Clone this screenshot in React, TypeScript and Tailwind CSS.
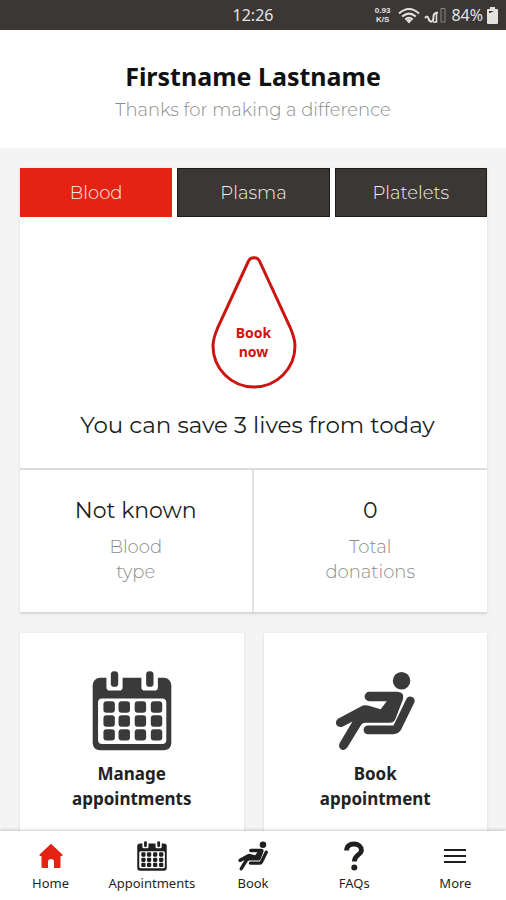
import { useState, type ReactNode } from "react";

const body = "font-['Montserrat','Inter',sans-serif]";
const display = "font-['Noto_Sans',sans-serif]";

function CalendarIcon({ className }: { className: string }) {
  return (
    <svg viewBox="66 34 238 238" className={className} aria-hidden="true">
      <rect x="68" y="54" width="234" height="216" rx="22" fill="currentColor" />
      <path d="M109 50H157V82Q157 92 147 92H119Q109 92 109 82ZM213 50H262V82Q262 92 252 92H223Q213 92 213 82Z" fill="#fff" />
      <rect x="122" y="35" width="22" height="46" rx="10" fill="currentColor" />
      <rect x="227" y="35" width="22" height="46" rx="10" fill="currentColor" />
      <rect x="84" y="116" width="203" height="135" rx="12" fill="#fff" />
      {[124, 166, 207].map((y) =>
        [100, 145, 193, 241].map((x) => (
          <rect key={`${x}-${y}`} x={x} y={y} width="34" height="34" rx="9" fill="currentColor" />
        )),
      )}
    </svg>
  );
}

function ReclineIcon({ className }: { className: string }) {
  return (
    <svg viewBox="76 36 238 236" className={className} fill="currentColor" stroke="currentColor" strokeLinecap="round" strokeLinejoin="round" aria-hidden="true">
      <circle cx="274" cy="64" r="26" stroke="none" />
      <path d="M178 97H262Q284 99 278 120L256 177Q251 189 240 189H166Q158 189 154 195L113 262Q106 272 96 269Q84 263 90 249L128 185L98 201Q86 204 80 195Q76 183 86 176L152 141Q162 135 174 138L212 149L230 125H178A14 14 0 0 1 178 97Z" stroke="none" />
      <path d="M174 210H250Q258 210 262 202L300 124" fill="none" strokeWidth="26" />
    </svg>
  );
}

function HomeIcon() {
  return (
    <svg viewBox="0 0 24 26" className="h-[26px] w-6 text-[#e42313]" fill="currentColor" aria-hidden="true">
      <path d="M12 0.8L23.4 11.5Q24 13 22.6 13H21.5V24Q21.5 25 20.5 25H15V18.5Q15 16 12 16T9 18.5V25H3.5Q2.5 25 2.5 24V13H1.4Q0 13 0.6 11.5Z" />
    </svg>
  );
}

function QuestionIcon() {
  return (
    <svg viewBox="0 0 20 30" className="h-[30px] w-5" fill="none" stroke="currentColor" aria-hidden="true">
      <path d="M2.6 9.5C2.6 5.3 5.5 3 10 3S17.4 5.6 17.4 9.2C17.4 14 10.4 13.6 10.4 20.5" strokeWidth="4.8" />
      <circle cx="10.3" cy="26.6" r="3" fill="currentColor" stroke="none" />
    </svg>
  );
}

function MenuIcon() {
  return (
    <svg viewBox="0 0 22 16" className="h-4 w-[22px]" stroke="currentColor" strokeWidth="2" aria-hidden="true">
      <path d="M0 2H22M0 8H22M0 14H22" />
    </svg>
  );
}

function StatusBar() {
  return (
    <div className="relative flex h-[30px] shrink-0 items-center justify-end bg-[#3b3735] pr-2 font-['Noto_Sans',sans-serif] text-[#e4e2e1]">
      <span className="absolute inset-x-0 text-center text-base">12:26</span>
      <div className="flex items-center gap-1">
        <div className="mr-1 text-center font-['Liberation_Sans',sans-serif] text-[8px] leading-[9px] font-bold">
          <div>0.93</div>
          <div>K/S</div>
        </div>
        <svg viewBox="0 0 22 17" className="h-[17px] w-[22px]" fill="none" stroke="currentColor" strokeWidth="2" aria-hidden="true">
          <path d="M1 6.5Q11 -2.5 21 6.5M4.2 9.6Q11 3.6 17.8 9.6M7.2 12.4Q11 9 14.8 12.4" />
          <path d="M8 13.2Q11 10.8 14 13.2L11 16.4Z" fill="currentColor" stroke="none" />
        </svg>
        <svg viewBox="0 0 23 18" className="h-[18px] w-[23px]" fill="none" stroke="currentColor" aria-hidden="true">
          <path d="M1 12Q3.5 9 4.5 12.500T7.500 15.500Q9.500 15 9.500 10.500Q9.500 7 14 6.500" strokeWidth="2" />
          <path d="M12.500 6V16H9" strokeWidth="1.500" />
          <path d="M17 2.500H21V16H17Z" stroke="#8a8684" />
        </svg>
        <span className="text-base">84%</span>
        <svg viewBox="0 0 11 17" className="h-[17px] w-[11px]" fill="currentColor" aria-hidden="true">
          <path d="M3 0H8V2H10Q11 2 11 3V16Q11 17 10 17H1Q0 17 0 16V3Q0 2 1 2H3Z" />
          <path d="M2 4H7L3 6H2Z" fill="#3b3735" />
        </svg>
      </div>
    </div>
  );
}

const tabs = ["Blood", "Plasma", "Platelets"];

function Stat({ value, first, second }: { value: string; first: string; second: string }) {
  return (
    <div className="px-4 pt-[25px] pb-[27px] text-center">
      <dd className="text-[22px] leading-8 text-[#1c1c1c]">{value}</dd>
      <dt className="mt-2 text-lg leading-[25px] font-light text-[#8c8c8c]">
        {first}
        <br />
        {second}
      </dt>
    </div>
  );
}

function ActionCard({ icon, first, second }: { icon: ReactNode; first: string; second: string }) {
  return (
    <button type="button" className={`flex flex-col items-center bg-white pt-[38px] pb-8 text-[17px] leading-[25px] font-bold text-[#222] shadow-sm ${display}`}>
      <span className="text-[#3a3a3a]">{icon}</span>
      <span className="mt-[10px]">
        {first}
        <br />
        {second}
      </span>
    </button>
  );
}

function NavItem({ icon, label }: { icon: ReactNode; label: string }) {
  return (
    <a href="#" className="flex flex-1 flex-col items-center text-[#1f1f1f]">
      <span className="flex h-[30px] items-center">{icon}</span>
      <span className="mt-[3px] text-[13px] leading-[18px] font-normal">{label}</span>
    </a>
  );
}

export default function App() {
  const [active, setActive] = useState("Blood");
  return (
    <div className={`flex h-screen flex-col overflow-hidden bg-[#f4f4f4] ${body}`}>
      <StatusBar />
      <header className="shrink-0 bg-white pt-7 pb-[25px] text-center">
        <h1 className={`text-[25px] leading-9 font-bold text-[#111] ${display}`}>Firstname Lastname</h1>
        <p className="mt-[3px] text-lg leading-[26px] font-light text-[#8c8c8c]">Thanks for making a difference</p>
      </header>

      <main className="min-h-0 flex-1 overflow-hidden pt-5 pr-[19px] pl-5">
        <section className="border-b border-[#d6d6d6] bg-white shadow-sm">
          <div role="tablist" className="grid grid-cols-3 gap-[5px]">
            {tabs.map((tab) => (
              <button
                key={tab}
                type="button"
                role="tab"
                aria-selected={tab === active}
                onClick={() => setActive(tab)}
                className={`h-[49px] text-lg font-light text-[#f1efee] ${tab === active ? "bg-[#e42313]" : "border border-[#1d1b1a] bg-[#3b3735]"}`}
              >
                {tab}
              </button>
            ))}
          </div>
          <div className="flex flex-col items-center pt-9 pb-[27px]">
            <button type="button" className="grid place-items-center text-[#cc1410]">
              <svg viewBox="0 0 90 136" className="col-start-1 row-start-1 h-[136px] w-[90px]" fill="none" stroke="currentColor" strokeWidth="3" aria-hidden="true">
                <path d="M39.500 8C41.500 3.500 48.500 3.500 50.500 8L81 74C84 81 86 86 86 93A41 41 0 0 1 4 93C4 86 6 81 9 74Z" />
              </svg>
              <span className={`col-start-1 row-start-1 pt-[42px] text-sm leading-[19px] font-bold ${display}`}>
                Book
                <br />
                now
              </span>
            </button>
            <p className="mt-5 pl-2 text-[23px] leading-8 text-[#1c1c1c]">You can save 3 lives from today</p>
          </div>
          <dl className="grid grid-cols-2 divide-x-2 divide-[#e2e2e2] border-t-2 border-[#dcdcdc]">
            <Stat value="Not known" first="Blood" second="type" />
            <Stat value="0" first="Total" second="donations" />
          </dl>
        </section>

        <section className="mt-5 grid grid-cols-2 gap-5">
          <ActionCard icon={<CalendarIcon className="size-20" />} first="Manage" second="appointments" />
          <ActionCard icon={<ReclineIcon className="size-20" />} first="Book" second="appointment" />
        </section>
      </main>

      <nav className={`flex h-[69px] shrink-0 bg-white pt-[10px] shadow-[0_-1px_3px_rgba(0,0,0,0.2)] ${display}`}>
        <NavItem icon={<HomeIcon />} label="Home" />
        <NavItem icon={<CalendarIcon className="size-[30px]" />} label="Appointments" />
        <NavItem icon={<ReclineIcon className="size-[30px]" />} label="Book" />
        <NavItem icon={<QuestionIcon />} label="FAQs" />
        <NavItem icon={<MenuIcon />} label="More" />
      </nav>
    </div>
  );
}
